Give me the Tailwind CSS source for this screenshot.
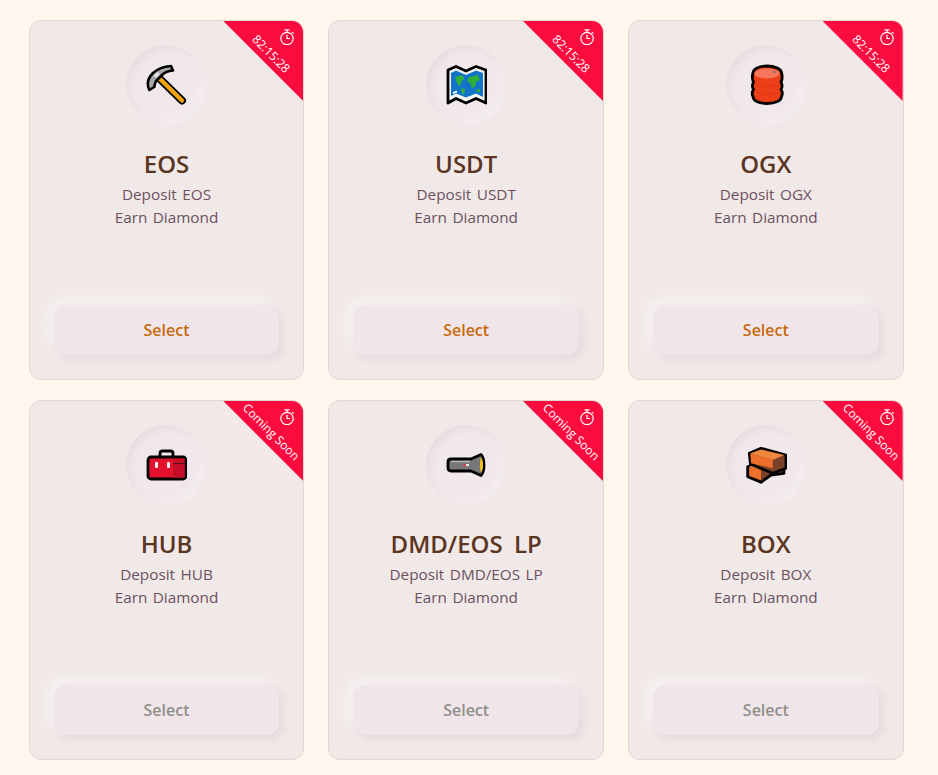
<!DOCTYPE html>
<html lang="en">
<head>
<meta charset="UTF-8">
<title>Farms</title>
<script src="https://cdn.jsdelivr.net/npm/@tailwindcss/browser@4"></script>
</head>
<body class="min-h-screen bg-[#fff7ee] font-['Open_Sans','Noto_Sans_CJK_KR',sans-serif]">
<svg class="hidden">
  <symbol id="timer" viewBox="0 0 16 16" fill="none" stroke="#fff" stroke-width="1.2">
    <circle cx="8" cy="9.500" r="6.200"/><path d="M5.500 .8h5M8 .8v2.400M13 3.200l1.500 1.500M8 5.800v3.700h3"/>
  </symbol>
</svg>
<div class="grid grid-cols-3 gap-x-6 gap-y-5 w-[875px] ml-[28.67px] pt-5">

  <!-- EOS -->
  <div class="relative h-[360px] rounded-xl border border-[#e3d6cf] bg-[#f1e9e8] overflow-hidden flex flex-col items-center">
    <div class="absolute top-0 right-0 w-20 h-20 bg-[#fb0c3f] [clip-path:polygon(0_0,100%_0,100%_100%)] text-white">
      <svg class="absolute top-2 right-2 w-4 h-4"><use href="#timer"/></svg>
      <span class="absolute left-[18px] top-[25px] w-[60px] text-center text-xs leading-4 rotate-45">82:15:28</span>
    </div>
    <div class="mt-6 w-20 h-20 rounded-full bg-[#f1e8ec] shadow-[inset_3px_3px_8px_#e8dadf,inset_-3px_-3px_8px_#f6f0f3] flex items-center justify-center">
      <svg class="w-[42px] h-[42px]" viewBox="0 0 42 42">
        <path d="M15 15l22 21.500" stroke="#000" stroke-width="8" stroke-linecap="round"/>
        <path d="M15 15l22 21.500" stroke="#f0a30a" stroke-width="4.500" stroke-linecap="round"/>
        <path d="M4.300 26C1.500 20 2 15 8 9c5-4.500 12-6.500 18-7l2 4.500c-5 .5-9 2.500-11 4.500l-6 6c-1 2-1.500 4-1.700 6z" fill="#a8a8a8" stroke="#000" stroke-width="2.600" stroke-linejoin="round"/>
        <path d="M12 8l3 2-4 4-2-2.500z" fill="#e6e6e6"/>
      </svg>
    </div>
    <h2 class="mt-[23px] text-2xl leading-8 font-semibold text-[#5a3522] [word-spacing:5px]">EOS</h2>
    <p class="mt-[3px] text-[15.3px] leading-[23px] text-[#6c5060] text-center [word-spacing:1.5px]">Deposit EOS<br>Earn Diamond</p>
    <button class="mt-auto mb-6 w-[225.5px] h-[50px] rounded-xl bg-[#f0e6ea] shadow-[4px_4px_8px_#e6d8dc,-6px_-6px_12px_#f6f1f1] text-base font-semibold text-[#c8690c]">Select</button>
  </div>

  <!-- USDT -->
  <div class="relative h-[360px] rounded-xl border border-[#e3d6cf] bg-[#f1e9e8] overflow-hidden flex flex-col items-center">
    <div class="absolute top-0 right-0 w-20 h-20 bg-[#fb0c3f] [clip-path:polygon(0_0,100%_0,100%_100%)] text-white">
      <svg class="absolute top-2 right-2 w-4 h-4"><use href="#timer"/></svg>
      <span class="absolute left-[18px] top-[25px] w-[60px] text-center text-xs leading-4 rotate-45">82:15:28</span>
    </div>
    <div class="mt-6 w-20 h-20 rounded-full bg-[#f1e8ec] shadow-[inset_3px_3px_8px_#e8dadf,inset_-3px_-3px_8px_#f6f0f3] flex items-center justify-center">
      <svg class="w-[42px] h-[42px]" viewBox="0 0 42 42">
        <path d="M3 6l8-3.500L21 7l10-4.500L41 6v33l-10-4.500L21 39l-10-4.500L3 39z" fill="#f4f4f4" stroke="#000" stroke-width="2.800" stroke-linejoin="round"/>
        <path d="M6 9l5-2.500L21 11l10-4.500L38 9v24l-7-3.500L21 33.500 11 29.500 6 32z" fill="#1273c9"/>
        <path d="M10 13l8-2 1 4-3 3-1 5-3-4zM16 24l4 1-1 6-2-2zM24 13l9-2 2 5-4 2-1 5-3 1-2-5-3-2zM32 25l3 0 0 3-3 0z" fill="#2fae38"/>
        <path d="M8 28l4-1.500v2L8 30z" fill="#fff"/>
      </svg>
    </div>
    <h2 class="mt-[23px] text-2xl leading-8 font-semibold text-[#5a3522] [word-spacing:5px]">USDT</h2>
    <p class="mt-[3px] text-[15.3px] leading-[23px] text-[#6c5060] text-center [word-spacing:1.5px]">Deposit USDT<br>Earn Diamond</p>
    <button class="mt-auto mb-6 w-[225.5px] h-[50px] rounded-xl bg-[#f0e6ea] shadow-[4px_4px_8px_#e6d8dc,-6px_-6px_12px_#f6f1f1] text-base font-semibold text-[#c8690c]">Select</button>
  </div>

  <!-- OGX -->
  <div class="relative h-[360px] rounded-xl border border-[#e3d6cf] bg-[#f1e9e8] overflow-hidden flex flex-col items-center">
    <div class="absolute top-0 right-0 w-20 h-20 bg-[#fb0c3f] [clip-path:polygon(0_0,100%_0,100%_100%)] text-white">
      <svg class="absolute top-2 right-2 w-4 h-4"><use href="#timer"/></svg>
      <span class="absolute left-[18px] top-[25px] w-[60px] text-center text-xs leading-4 rotate-45">82:15:28</span>
    </div>
    <div class="mt-6 w-20 h-20 rounded-full bg-[#f1e8ec] shadow-[inset_3px_3px_8px_#e8dadf,inset_-3px_-3px_8px_#f6f0f3] flex items-center justify-center">
      <svg class="w-[42px] h-[42px]" viewBox="0 0 42 42">
        <path d="M8 9c0-4 6-7 14-7s14.500 3 14.500 7c1 3 1 6-.5 9 1.500 2.500 1.500 5 0 7.500 1.500 2 1.500 5 .5 7 0 4-6 7-14.500 7s-14-3-14-7c-1-2-1-5 .5-7-1.500-2.500-1.500-5 0-7.500-1.500-3-1.500-6-.5-9z" fill="#ef3f18" stroke="#000" stroke-width="2.800"/>
        <path d="M9 20c4 3 22 3 26 0M9 28c4 3 22 3 26 0" fill="none" stroke="#dd3a15" stroke-width="1"/>
        <ellipse cx="22" cy="9.500" rx="12.500" ry="5" fill="#f7775c"/>
        <ellipse cx="29.500" cy="8" rx="1.500" ry="1" fill="#777"/>
      </svg>
    </div>
    <h2 class="mt-[23px] text-2xl leading-8 font-semibold text-[#5a3522] [word-spacing:5px]">OGX</h2>
    <p class="mt-[3px] text-[15.3px] leading-[23px] text-[#6c5060] text-center [word-spacing:1.5px]">Deposit OGX<br>Earn Diamond</p>
    <button class="mt-auto mb-6 w-[225.5px] h-[50px] rounded-xl bg-[#f0e6ea] shadow-[4px_4px_8px_#e6d8dc,-6px_-6px_12px_#f6f1f1] text-base font-semibold text-[#c8690c]">Select</button>
  </div>

  <!-- HUB -->
  <div class="relative h-[360px] rounded-xl border border-[#e3d6cf] bg-[#f1e9e8] overflow-hidden flex flex-col items-center">
    <div class="absolute top-0 right-0 w-20 h-20 bg-[#fb0c3f] [clip-path:polygon(0_0,100%_0,100%_100%)] text-white">
      <svg class="absolute top-2 right-2 w-4 h-4"><use href="#timer"/></svg>
      <span class="absolute left-[8px] top-[23px] w-[80px] text-center text-xs leading-4 rotate-45">Coming Soon</span>
    </div>
    <div class="mt-6 w-20 h-20 rounded-full bg-[#f1e8ec] shadow-[inset_3px_3px_8px_#e8dadf,inset_-3px_-3px_8px_#f6f0f3] flex items-center justify-center">
      <svg class="w-[42px] h-[42px]" viewBox="0 0 42 42">
        <path d="M15 13V9.500C15 8 16 7 17.500 7h8C27 7 28 8 28 9.500V13" fill="none" stroke="#000" stroke-width="2.800"/>
        <rect x="3" y="13" width="38" height="22" rx="3" fill="#e4122f" stroke="#000" stroke-width="2.800"/>
        <path d="M28 14.500h11.500v19H28z" fill="#c50f28"/>
        <path d="M28 19.500h12" stroke="#5a1018" stroke-width="1"/>
        <rect x="10" y="18" width="3" height="6" rx="1" fill="#eee"/>
        <rect x="22" y="18" width="3" height="6" rx="1" fill="#eee"/>
      </svg>
    </div>
    <h2 class="mt-[23px] text-2xl leading-8 font-semibold text-[#5a3522] [word-spacing:5px]">HUB</h2>
    <p class="mt-[3px] text-[15.3px] leading-[23px] text-[#6c5060] text-center [word-spacing:1.5px]">Deposit HUB<br>Earn Diamond</p>
    <button class="mt-auto mb-6 w-[225.5px] h-[50px] rounded-xl bg-[#f0e6ea] shadow-[4px_4px_8px_#e6d8dc,-6px_-6px_12px_#f6f1f1] text-base font-semibold text-[#8f9088]">Select</button>
  </div>

  <!-- DMD/EOS LP -->
  <div class="relative h-[360px] rounded-xl border border-[#e3d6cf] bg-[#f1e9e8] overflow-hidden flex flex-col items-center">
    <div class="absolute top-0 right-0 w-20 h-20 bg-[#fb0c3f] [clip-path:polygon(0_0,100%_0,100%_100%)] text-white">
      <svg class="absolute top-2 right-2 w-4 h-4"><use href="#timer"/></svg>
      <span class="absolute left-[8px] top-[23px] w-[80px] text-center text-xs leading-4 rotate-45">Coming Soon</span>
    </div>
    <div class="mt-6 w-20 h-20 rounded-full bg-[#f1e8ec] shadow-[inset_3px_3px_8px_#e8dadf,inset_-3px_-3px_8px_#f6f0f3] flex items-center justify-center">
      <svg class="w-[42px] h-[42px]" viewBox="0 0 42 42">
        <path d="M6 15h20l10-4.500c2 2 3 6 3 10.500s-1 8.500-3 10.500L26 27H6c-2 0-3-1-3-3v-6c0-2 1-3 3-3z" fill="#777" stroke="#000" stroke-width="2.800" stroke-linejoin="round"/>
        <path d="M6 17.500h19" stroke="#b5b5b5" stroke-width="1.500"/>
        <path d="M36 13c1.500 2 2 5 2 8s-.5 6-2 8c-.5-2-1-5-1-8s.5-6 1-8z" fill="#f5c518"/>
        <circle cx="19.500" cy="21" r="1.300" fill="#f0304a"/>
        <rect x="21" y="20" width="3" height="2" fill="#eee"/>
      </svg>
    </div>
    <h2 class="mt-[23px] text-2xl leading-8 font-semibold text-[#5a3522] [word-spacing:5px]">DMD/EOS LP</h2>
    <p class="mt-[3px] text-[15.3px] leading-[23px] text-[#6c5060] text-center [word-spacing:1.5px]">Deposit DMD/EOS LP<br>Earn Diamond</p>
    <button class="mt-auto mb-6 w-[225.5px] h-[50px] rounded-xl bg-[#f0e6ea] shadow-[4px_4px_8px_#e6d8dc,-6px_-6px_12px_#f6f1f1] text-base font-semibold text-[#8f9088]">Select</button>
  </div>

  <!-- BOX -->
  <div class="relative h-[360px] rounded-xl border border-[#e3d6cf] bg-[#f1e9e8] overflow-hidden flex flex-col items-center">
    <div class="absolute top-0 right-0 w-20 h-20 bg-[#fb0c3f] [clip-path:polygon(0_0,100%_0,100%_100%)] text-white">
      <svg class="absolute top-2 right-2 w-4 h-4"><use href="#timer"/></svg>
      <span class="absolute left-[8px] top-[23px] w-[80px] text-center text-xs leading-4 rotate-45">Coming Soon</span>
    </div>
    <div class="mt-6 w-20 h-20 rounded-full bg-[#f1e8ec] shadow-[inset_3px_3px_8px_#e8dadf,inset_-3px_-3px_8px_#f6f0f3] flex items-center justify-center">
      <svg class="w-[42px] h-[42px]" viewBox="0 0 42 42">
        <path d="M2.700 22.700L14 18l25 8v3.300L26 31l-10 7.300-13.300-5.600z" fill="#7a4028" stroke="#000" stroke-width="2.800" stroke-linejoin="round"/>
        <path d="M4.300 22.700L14 19.500 27.700 24.300 16 26z" fill="#f0874a"/>
        <path d="M4.300 22.700L16 26v10L4.300 32z" fill="#ee6f2c"/>
        <path d="M4.300 9.300L16 4.300 41 11v13.300L27.700 29.300 5.500 20z" fill="#7a4028" stroke="#000" stroke-width="2.800" stroke-linejoin="round"/>
        <path d="M5.300 9.300L27.700 16v8.300L6 19.300z" fill="#ee6f2c"/>
        <path d="M5.300 9.300L16 5.500 39.500 11 27.700 16z" fill="#f0873f"/>
      </svg>
    </div>
    <h2 class="mt-[23px] text-2xl leading-8 font-semibold text-[#5a3522] [word-spacing:5px]">BOX</h2>
    <p class="mt-[3px] text-[15.3px] leading-[23px] text-[#6c5060] text-center [word-spacing:1.5px]">Deposit BOX<br>Earn Diamond</p>
    <button class="mt-auto mb-6 w-[225.5px] h-[50px] rounded-xl bg-[#f0e6ea] shadow-[4px_4px_8px_#e6d8dc,-6px_-6px_12px_#f6f1f1] text-base font-semibold text-[#8f9088]">Select</button>
  </div>

</div>
</body>
</html>
